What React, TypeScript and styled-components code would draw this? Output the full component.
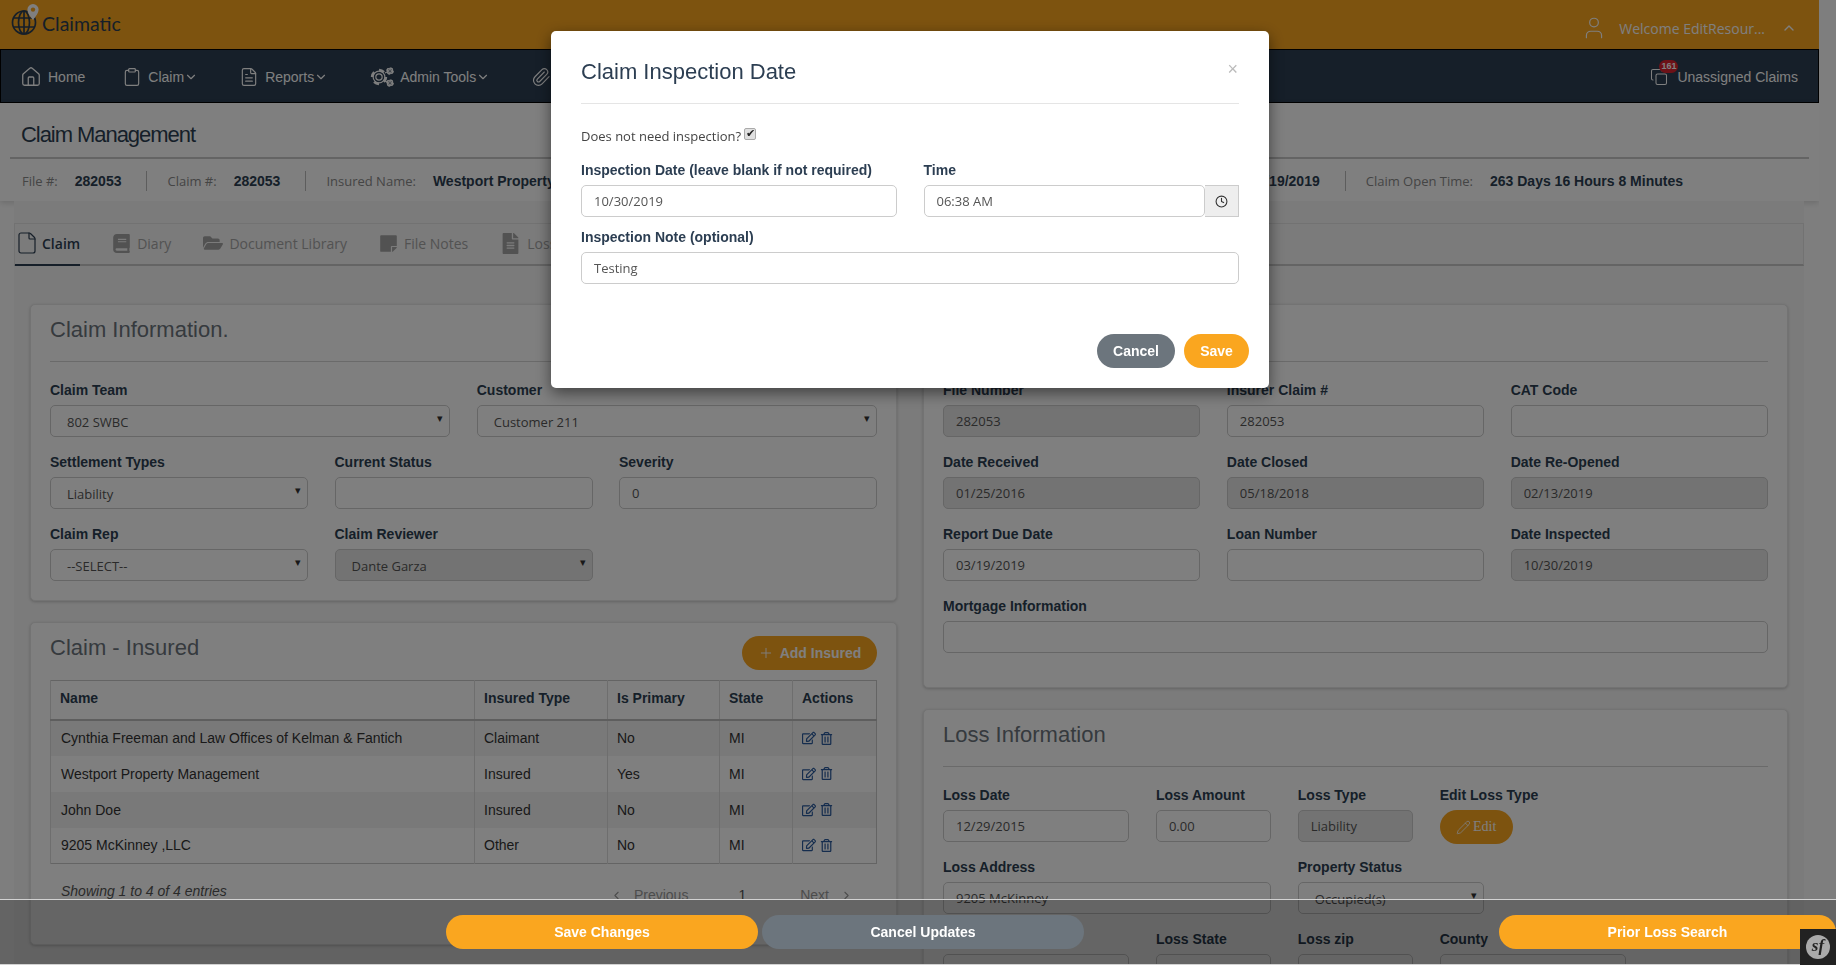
import React from 'react'
import styled, { createGlobalStyle } from 'styled-components'
import {
  ChevronDown,
  ChevronLeft,
  ChevronRight,
  ChevronUp,
  Clipboard,
  Clock,
  Copy,
  File,
  FileText,
  House,
  Paperclip,
  Pencil,
  Plus,
  User,
} from 'lucide-react'
import {
  FaBook,
  FaFileAlt,
  FaFolderOpen,
  FaRegEdit,
  FaRegTrashAlt,
  FaStickyNote,
} from 'react-icons/fa'

const sans = `"Liberation Sans", Arial, sans-serif`
const open = `"Open Sans", "Noto Sans", sans-serif`

const GlobalStyle = createGlobalStyle`
  html, body {
    margin: 0;
    height: 965px;
    overflow: hidden;
    background: #fdfdfd;
  }
  * {
    box-sizing: border-box;
  }
`

const Page = styled.div`
  width: 1819px;
  height: 965px;
  overflow: hidden;
  font-family: ${sans};
  color: #333;
`

const TopBar = styled.header`
  height: 49px;
  background: #faa61f;
  display: flex;
  align-items: flex-start;
  justify-content: space-between;
  padding: 0 22px 0 10px;
`
const Logo = styled.div`
  display: flex;
  align-items: flex-start;
  gap: 2px;
  padding-top: 3px;
  font-family: Lato, ${open};
  font-size: 19.5px;
  line-height: 42px;
  color: #2c3e52;
`
const Welcome = styled.div`
  display: flex;
  align-items: center;
  height: 56px;
  font-family: ${open};
  font-size: 14px;
  color: #fff;
  svg:first-child {
    margin-right: 12px;
  }
  span {
    margin-right: 16px;
  }
`

const Nav = styled.nav`
  height: 54px;
  background: #2c3e52;
  border: 1px solid #000;
  display: flex;
  align-items: center;
  padding: 2px 20px 0 19px;
  color: #fff;
  font-size: 14px;
`
const NavItem = styled.div`
  display: flex;
  align-items: center;
  margin-right: 41px;
  &:first-child {
    margin-right: 37px;
  }
  > svg:first-child {
    margin-right: 6px;
  }
`
const UnassignedLink = styled.div`
  position: relative;
  margin-left: auto;
  display: flex;
  align-items: center;
  gap: 9px;
`
const CountBadge = styled.span`
  position: absolute;
  left: 9px;
  top: -8px;
  width: 19px;
  height: 13px;
  border-radius: 7px;
  background: #d9232e;
  color: #fff;
  font-size: 9px;
  font-weight: 700;
  line-height: 13px;
  text-align: center;
`

const PageHead = styled.section`
  height: 98px;
  background: #fff;
  padding: 0 10px;
  box-shadow: 0 2px 6px rgba(0, 0, 0, 0.15);
  position: relative;
`
const PageTitle = styled.h1`
  margin: 0;
  height: 56px;
  padding: 19px 0 0 11px;
  border-bottom: 2px solid #c8c8c8;
  font-size: 22px;
  font-weight: 400;
  line-height: 26px;
  letter-spacing: -1.05px;
  color: #2c3e52;
`
const InfoRow = styled.div`
  display: flex;
  align-items: center;
  height: 42px;
  padding: 2px 126px 0 12px;
`
const InfoItem = styled.div<{ $grow?: boolean }>`
  display: flex;
  align-items: center;
  height: 20px;
  padding-right: 25px;
  margin-right: 20px;
  border-right: 1px solid #bbb;
  flex-grow: ${({ $grow }) => ($grow ? 1 : 0)};
  white-space: nowrap;
  &:last-child {
    border-right: 0;
    padding-right: 0;
    margin-right: 0;
  }
`
const InfoLabel = styled.span`
  font-family: ${open};
  font-size: 13px;
  color: #8a8a8a;
  margin-right: 17px;
`
const InfoValue = styled.span`
  font-size: 14px;
  font-weight: 700;
  color: #2c3e52;
`

const Content = styled.main`
  margin: 0 15px 0 14px;
  padding: 22px 16px 0;
  background: #f6f6f6;
  position: relative;
`
const Tabs = styled.div`
  height: 43px;
  margin: 0 -16px 38px;
  border: 1px solid #e4e4e4;
  border-bottom: 2px solid #c9c9c9;
  display: flex;
  align-items: stretch;
  font-family: ${open};
  font-size: 14px;
`
const Tab = styled.div<{ $active?: boolean }>`
  display: flex;
  align-items: center;
  gap: ${({ $active }) => ($active ? 3 : 6)}px;
  padding-bottom: 2px;
  margin-right: 32px;
  margin-bottom: -2px;
  color: ${({ $active }) => ($active ? '#2c3e52' : '#a5a5a5')};
  font-weight: ${({ $active }) => ($active ? 600 : 400)};
  border-bottom: 2px solid ${({ $active }) => ($active ? '#2c3e52' : 'transparent')};
`

const Columns = styled.div`
  display: grid;
  grid-template-columns: 867px 865px;
  column-gap: 26px;
  align-items: start;
`
const Column = styled.div`
  display: flex;
  flex-direction: column;
  gap: 21px;
`
const Panel = styled.section<{ $bottom: number }>`
  background: #fff;
  border: 1px solid #e6e6e6;
  border-radius: 5px;
  box-shadow: 0 1px 3px rgba(0, 0, 0, 0.2);
  padding: 0 19px ${({ $bottom }) => $bottom}px;
`
const PanelTitle = styled.h2`
  margin: 0 0 18px;
  height: 57px;
  padding-top: 12px;
  border-bottom: 1px solid #d5d5d5;
  font-size: 22px;
  font-weight: 400;
  line-height: 26px;
  color: #6c757d;
`
const InsuredHead = styled.div`
  display: flex;
  justify-content: space-between;
  height: 57px;
  padding-top: 12px;
  h2 {
    margin: 0;
    font-size: 22px;
    font-weight: 400;
    line-height: 26px;
    color: #6c757d;
  }
`

const FormGrid = styled.div`
  display: grid;
  grid-template-columns: repeat(12, 1fr);
  column-gap: 26.5px;
`
const Field = styled.div<{ $span: number }>`
  grid-column: span ${({ $span }) => $span};
  margin-bottom: 15px;
  min-width: 0;
`
const Label = styled.label`
  display: block;
  height: 20px;
  margin-bottom: 5px;
  font-size: 14px;
  font-weight: 700;
  line-height: 20px;
  color: #2c3e52;
  white-space: nowrap;
`
const Input = styled.input`
  display: block;
  width: 100%;
  height: 32px;
  padding: 0 12px;
  border: 1px solid #ccc;
  border-radius: 5px;
  background: #fff;
  font-family: ${open};
  font-size: 13px;
  color: #555;
  outline: none;
  &:read-only[data-locked='true'] {
    background: #e6e6e6;
  }
`
const SelectWrap = styled.div`
  position: relative;
  &::after {
    content: '▾';
    position: absolute;
    right: 7px;
    top: 7px;
    font-size: 11px;
    color: #333;
  }
`
const Select = styled.select`
  display: block;
  width: 100%;
  height: 32px;
  padding: 2px 16px 0;
  appearance: none;
  border: 1px solid #ccc;
  border-radius: 5px;
  background: #fff;
  font-family: ${open};
  font-size: 13px;
  color: #555;
  opacity: 1;
  &:disabled {
    background: #e6e6e6;
    color: #555;
  }
`

const OrangeButton = styled.button`
  height: 34px;
  border: 0;
  border-radius: 17px;
  background: #faa61f;
  color: #fff;
  font-family: ${sans};
  font-size: 14px;
  font-weight: 700;
  display: inline-flex;
  align-items: center;
  justify-content: center;
  gap: 6px;
  padding: 0 16px;
  white-space: nowrap;
`
const AddButton = styled(OrangeButton)`
  width: 135px;
  padding: 0;
  margin-top: 1px;
`
const EditButton = styled(OrangeButton)`
  width: 73px;
  font-family: "Liberation Serif", serif;
  font-weight: 400;
  gap: 2px;
  padding: 0;
  margin-bottom: -2px;
`
const GrayButton = styled(OrangeButton)`
  background: #6c757d;
`

const Table = styled.table`
  width: 826px;
  border-collapse: collapse;
  border: 1px solid #c9c9c9;
  font-size: 14px;
  table-layout: fixed;
`
const Th = styled.th<{ $width: number }>`
  width: ${({ $width }) => $width}px;
  height: 39px;
  padding: 0 9px 3px;
  border-left: 1px solid #dcdcdc;
  border-bottom: 2px solid #bdbdbd;
  text-align: left;
  font-weight: 700;
  color: #2c3e52;
`
const Tr = styled.tr`
  height: 36px;
  &:nth-child(odd) {
    background: #f2f2f2;
  }
`
const Td = styled.td`
  padding: 0 9px;
  border-left: 1px solid #dcdcdc;
  color: #333;
  &:first-child {
    padding-left: 10px;
  }
`
const ActionIcons = styled.div`
  display: flex;
  align-items: center;
  gap: 4px;
  color: #2a5a9c;
`
const TableFoot = styled.div`
  display: flex;
  justify-content: space-between;
  padding: 19px 24px 0 11px;
  height: 80px;
  font-size: 14px;
`
const Entries = styled.span`
  font-style: italic;
  color: #555;
`
const Pager = styled.div`
  display: flex;
  align-items: center;
  height: 16px;
  margin-top: 4px;
  color: #999;
  span {
    margin: 0 11px;
  }
  span:nth-child(3) {
    margin: 0 54px 0 39px;
    color: #555;
  }
`

const BottomBar = styled.footer`
  position: fixed;
  left: 0;
  right: 0;
  bottom: 0;
  height: 66px;
  z-index: 20;
  padding: 15px 0 0 446px;
  display: flex;
  align-items: flex-start;
  background: rgba(0, 0, 0, 0.2);
  border-top: 1px solid #d2d2d2;
  border-bottom: 1px solid #d2d2d2;
`
const SaveChanges = styled(OrangeButton)`
  width: 312px;
  margin-right: 4px;
`
const CancelUpdates = styled(GrayButton)`
  width: 322px;
  margin-right: 415px;
`
const PriorSearch = styled(OrangeButton)`
  width: 337px;
`
const SymfonyBar = styled.div`
  position: absolute;
  right: 0;
  bottom: -1px;
  width: 36px;
  height: 36px;
  background: #222;
  display: flex;
  align-items: center;
  justify-content: center;
`
const SymfonyMark = styled.span`
  width: 24px;
  height: 24px;
  border-radius: 50%;
  background: #aaa;
  color: #222;
  font-family: "Liberation Serif", serif;
  font-style: italic;
  font-weight: 700;
  font-size: 17px;
  line-height: 22px;
  text-align: center;
`

const Backdrop = styled.div`
  position: fixed;
  inset: 0;
  z-index: 10;
  background: rgba(0, 0, 0, 0.5);
`
const Modal = styled.div`
  position: fixed;
  z-index: 30;
  left: 551px;
  top: 31px;
  width: 718px;
  height: 357px;
  padding: 0 30px;
  background: #fff;
  border-radius: 5px;
  box-shadow: 0 5px 15px rgba(0, 0, 0, 0.5);
  font-family: ${sans};
`
const ModalHead = styled.div`
  height: 73px;
  border-bottom: 1px solid #e5e5e5;
  display: flex;
  justify-content: space-between;
  padding-top: 27px;
`
const ModalTitle = styled.h3`
  margin: 0;
  font-size: 22px;
  font-weight: 400;
  line-height: 27px;
  color: #2c3e52;
`
const CloseMark = styled.span`
  font-size: 18px;
  line-height: 22px;
  margin-right: 1px;
  color: #bbb;
`
const CheckRow = styled.div`
  display: flex;
  align-items: center;
  height: 20px;
  margin: 22px 0 14px;
  gap: 3px;
  font-family: ${open};
  font-size: 13px;
  color: #444;
`
const CheckBox = styled.input`
  appearance: none;
  width: 12px;
  height: 12px;
  margin: -5px 0 0;
  border: 1px solid #aaa;
  border-radius: 2px;
  background: #e0e0e0;
  position: relative;
  &::before {
    content: '✔';
    position: absolute;
    left: 1px;
    top: -2px;
    font-size: 11px;
    line-height: 12px;
    color: #222;
  }
`
const DateGrid = styled.div`
  display: grid;
  grid-template-columns: 315.5px 315.5px;
  column-gap: 27px;
`
const ModalLabel = styled(Label)`
  margin-bottom: 5px;
`
const TimeGroup = styled.div`
  display: flex;
`
const TimeInput = styled(Input)`
  flex: 1;
  border-radius: 5px;
`
const TimeAddon = styled.span`
  width: 34px;
  height: 32px;
  background: #eee;
  border: 1px solid #ccc;
  border-left: 0;
  display: flex;
  align-items: center;
  justify-content: center;
  color: #333;
`
const ModalField = styled.div`
  margin-bottom: 10px;
`
const ModalFoot = styled.div`
  display: flex;
  justify-content: flex-end;
  gap: 9px;
  margin: 50px -10px 0 0;
`
const ModalCancel = styled(GrayButton)`
  width: 78px;
  padding: 0;
`
const ModalSave = styled(OrangeButton)`
  width: 65px;
  padding: 0;
`

const GlobeLogo = () => (
  <svg width="30" height="34" viewBox="0 0 30 34" fill="none">
    <g stroke="#2c3e52" strokeWidth="1.7">
      <circle cx="14" cy="19.5" r="11.5" />
      <ellipse cx="14" cy="19.5" rx="5.5" ry="11.5" />
      <path d="M14 8v23M3.5 15h21M3.5 24h21" />
    </g>
    <path
      d="M23 1a5.6 5.6 0 0 0-5.6 5.6C17.4 10.8 23 17 23 17s5.6-6.2 5.6-10.4A5.6 5.6 0 0 0 23 1z"
      fill="#fff"
    />
    <circle cx="23" cy="6.6" r="2.2" fill="#faa61f" />
  </svg>
)

const Cog = ({ x, y, r }: { x: number; y: number; r: number }) => (
  <g transform={`translate(${x} ${y})`} stroke="currentColor" fill="none">
    <circle r={r * 0.42} strokeWidth="1.2" />
    <circle r={r * 0.78} strokeWidth="1.2" />
    <circle
      r={r * 0.92}
      strokeWidth={r * 0.35}
      strokeDasharray={`${r * 0.72} ${r * 0.72}`}
    />
  </g>
)
const CogsIcon = () => (
  <svg width="25" height="20" viewBox="0 0 25 20">
    <Cog x={10} y={10} r={7.5} />
    <Cog x={21} y={4} r={3.5} />
    <Cog x={21} y={16} r={3.5} />
    <path d="M16 6l2-1M16 14l2 1" stroke="currentColor" strokeWidth="1.2" />
  </svg>
)

const FieldBox = ({
  label,
  span,
  value = '',
  locked,
}: {
  label: string
  span: number
  value?: string
  locked?: boolean
}) => (
  <Field $span={span}>
    <Label>{label}</Label>
    <Input readOnly value={value} data-locked={locked ? 'true' : 'false'} />
  </Field>
)

const SelectBox = ({
  label,
  span,
  value,
  disabled,
}: {
  label: string
  span: number
  value: string
  disabled?: boolean
}) => (
  <Field $span={span}>
    <Label>{label}</Label>
    <SelectWrap>
      <Select disabled={disabled} defaultValue={value}>
        <option>{value}</option>
      </Select>
    </SelectWrap>
  </Field>
)

const insured = [
  ['Cynthia Freeman and Law Offices of Kelman & Fantich', 'Claimant', 'No', 'MI'],
  ['Westport Property Management', 'Insured', 'Yes', 'MI'],
  ['John Doe', 'Insured', 'No', 'MI'],
  ['9205 McKinney ,LLC', 'Other', 'No', 'MI'],
]

const App = (): JSX.Element => (
  <>
    <GlobalStyle />
    <Page>
      <TopBar>
        <Logo>
          <GlobeLogo />
          Claimatic
        </Logo>
        <Welcome>
          <User size={26} strokeWidth={1.1} />
          <span>Welcome EditResour...</span>
          <ChevronUp size={16} />
        </Welcome>
      </TopBar>
      <Nav>
        <NavItem>
          <House size={22} strokeWidth={1.4} />
          Home
        </NavItem>
        <NavItem>
          <Clipboard size={20} strokeWidth={1.4} />
          Claim
          <ChevronDown size={14} />
        </NavItem>
        <NavItem>
          <FileText size={20} strokeWidth={1.4} />
          Reports
          <ChevronDown size={14} />
        </NavItem>
        <NavItem>
          <CogsIcon />
          Admin Tools
          <ChevronDown size={14} />
        </NavItem>
        <NavItem>
          <Paperclip size={20} strokeWidth={1.4} />
        </NavItem>
        <UnassignedLink>
          <Copy size={18} strokeWidth={1.4} />
          <CountBadge>161</CountBadge>
          Unassigned Claims
        </UnassignedLink>
      </Nav>
      <PageHead>
        <PageTitle>Claim Management</PageTitle>
        <InfoRow>
          <InfoItem>
            <InfoLabel>File #:</InfoLabel>
            <InfoValue>282053</InfoValue>
          </InfoItem>
          <InfoItem>
            <InfoLabel>Claim #:</InfoLabel>
            <InfoValue>282053</InfoValue>
          </InfoItem>
          <InfoItem $grow>
            <InfoLabel>Insured Name:</InfoLabel>
            <InfoValue>Westport Property Management</InfoValue>
          </InfoItem>
          <InfoItem>
            <InfoLabel>Report Due:</InfoLabel>
            <InfoValue>03/19/2019</InfoValue>
          </InfoItem>
          <InfoItem>
            <InfoLabel>Claim Open Time:</InfoLabel>
            <InfoValue>263 Days 16 Hours 8 Minutes</InfoValue>
          </InfoItem>
        </InfoRow>
      </PageHead>
      <Content>
        <Tabs>
          <Tab $active>
            <File size={24} strokeWidth={1.2} />
            Claim
          </Tab>
          <Tab>
            <FaBook size={19} />
            Diary
          </Tab>
          <Tab>
            <FaFolderOpen size={20} />
            Document Library
          </Tab>
          <Tab>
            <FaStickyNote size={19} />
            File Notes
          </Tab>
          <Tab>
            <FaFileAlt size={21} />
            Loss
          </Tab>
        </Tabs>
        <Columns>
          <Column>
            <Panel $bottom={4}>
              <PanelTitle>Claim Information.</PanelTitle>
              <FormGrid>
                <SelectBox label="Claim Team" span={6} value="802 SWBC" />
                <SelectBox label="Customer" span={6} value="Customer 211" />
                <SelectBox label="Settlement Types" span={4} value="Liability" />
                <FieldBox label="Current Status" span={4} />
                <FieldBox label="Severity" span={4} value="0" />
                <SelectBox label="Claim Rep" span={4} value="--SELECT--" />
                <SelectBox label="Claim Reviewer" span={4} value="Dante Garza" disabled />
              </FormGrid>
            </Panel>
            <Panel $bottom={0}>
              <InsuredHead>
                <h2>Claim - Insured</h2>
                <AddButton>
                  <Plus size={16} strokeWidth={1.4} />
                  Add Insured
                </AddButton>
              </InsuredHead>
              <Table>
                <thead>
                  <tr>
                    <Th $width={424}>Name</Th>
                    <Th $width={133}>Insured Type</Th>
                    <Th $width={112}>Is Primary</Th>
                    <Th $width={73}>State</Th>
                    <Th $width={84}>Actions</Th>
                  </tr>
                </thead>
                <tbody>
                  {insured.map(row => (
                    <Tr key={row[0]}>
                      {row.map((cell, i) => (
                        <Td key={i}>{cell}</Td>
                      ))}
                      <Td>
                        <ActionIcons>
                          <FaRegEdit size={14} />
                          <FaRegTrashAlt size={13} />
                        </ActionIcons>
                      </Td>
                    </Tr>
                  ))}
                </tbody>
              </Table>
              <TableFoot>
                <Entries>Showing 1 to 4 of 4 entries</Entries>
                <Pager>
                  <ChevronLeft size={13} />
                  <span>Previous</span>
                  <span>1</span>
                  Next
                  <ChevronRight size={13} style={{ marginLeft: 11 }} />
                </Pager>
              </TableFoot>
            </Panel>
          </Column>
          <Column>
            <Panel $bottom={19}>
              <PanelTitle>File Information</PanelTitle>
              <FormGrid>
                <FieldBox label="File Number" span={4} value="282053" locked />
                <FieldBox label="Insurer Claim #" span={4} value="282053" />
                <FieldBox label="CAT Code" span={4} />
                <FieldBox label="Date Received" span={4} value="01/25/2016" locked />
                <FieldBox label="Date Closed" span={4} value="05/18/2018" locked />
                <FieldBox label="Date Re-Opened" span={4} value="02/13/2019" locked />
                <FieldBox label="Report Due Date" span={4} value="03/19/2019" />
                <FieldBox label="Loan Number" span={4} />
                <FieldBox label="Date Inspected" span={4} value="10/30/2019" locked />
                <FieldBox label="Mortgage Information" span={12} />
              </FormGrid>
            </Panel>
            <Panel $bottom={20}>
              <PanelTitle>Loss Information</PanelTitle>
              <FormGrid>
                <FieldBox label="Loss Date" span={3} value="12/29/2015" />
                <FieldBox label="Loss Amount" span={2} value="0.00" />
                <FieldBox label="Loss Type" span={2} value="Liability" locked />
                <Field $span={5}>
                  <Label>Edit Loss Type</Label>
                  <EditButton>
                    <Pencil size={15} strokeWidth={1.3} />
                    Edit
                  </EditButton>
                </Field>
                <FieldBox label="Loss Address" span={5} value="9205 McKinney" />
                <SelectBox label="Property Status" span={3} value="Occupied(s)" />
                <Field $span={4} />
                <FieldBox label="" span={3} />
                <FieldBox label="Loss State" span={2} />
                <FieldBox label="Loss zip" span={2} />
                <FieldBox label="County" span={3} />
              </FormGrid>
            </Panel>
          </Column>
        </Columns>
      </Content>
    </Page>

    <BottomBar>
      <SaveChanges>Save Changes</SaveChanges>
      <CancelUpdates>Cancel Updates</CancelUpdates>
      <PriorSearch>Prior Loss Search</PriorSearch>
      <SymfonyBar>
        <SymfonyMark>sf</SymfonyMark>
      </SymfonyBar>
    </BottomBar>

    <Backdrop />
    <Modal>
      <ModalHead>
        <ModalTitle>Claim Inspection Date</ModalTitle>
        <CloseMark>×</CloseMark>
      </ModalHead>
      <CheckRow>
        Does not need inspection?
        <CheckBox type="checkbox" checked readOnly />
      </CheckRow>
      <DateGrid>
        <ModalField>
          <ModalLabel>Inspection Date (leave blank if not required)</ModalLabel>
          <Input readOnly value="10/30/2019" />
        </ModalField>
        <ModalField>
          <ModalLabel>Time</ModalLabel>
          <TimeGroup>
            <TimeInput readOnly value="06:38 AM" />
            <TimeAddon>
              <Clock size={13} />
            </TimeAddon>
          </TimeGroup>
        </ModalField>
      </DateGrid>
      <ModalField>
        <ModalLabel>Inspection Note (optional)</ModalLabel>
        <Input readOnly value="Testing" />
      </ModalField>
      <ModalFoot>
        <ModalCancel>Cancel</ModalCancel>
        <ModalSave>Save</ModalSave>
      </ModalFoot>
    </Modal>
  </>
)

export default App
